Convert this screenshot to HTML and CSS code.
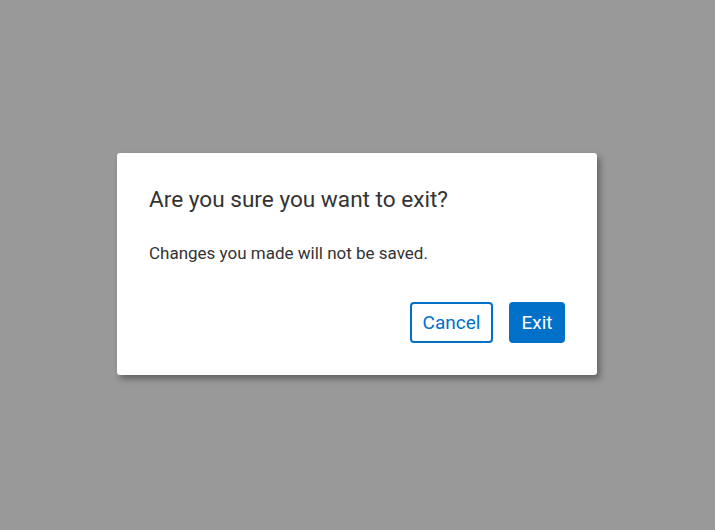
FILE: index.html
```html
<!DOCTYPE html>
<html>
<head>
<meta charset="utf-8">
<link rel="stylesheet" href="styles.css">
</head>
<body>
<div class="overlay">
  <div class="dialog" role="dialog">
    <h2 class="title">Are you sure you want to exit?</h2>
    <p class="message">Changes you made will not be saved.</p>
    <div class="actions">
      <button class="btn btn-secondary">Cancel</button>
      <button class="btn btn-primary">Exit</button>
    </div>
  </div>
</div>
</body>
</html>
```
FILE: styles.css
```css
html, body {
  margin: 0;
  padding: 0;
  height: 100%;
}
body {
  background: #999999;
  font-family: Roboto, "Liberation Sans", sans-serif;
  color: #333333;
}
.overlay {
  display: flex;
  align-items: flex-start;
  justify-content: flex-start;
  padding: 153px 0 0 117px;
  box-sizing: border-box;
  height: 100%;
}
.dialog {
  width: 480px;
  box-sizing: border-box;
  background: #ffffff;
  border-radius: 3px;
  box-shadow: 3px 4px 6px rgba(0, 0, 0, 0.35);
  padding: 32px 32px 32px 32px;
}
.title {
  margin: 0;
  font-size: 22.6px;
  line-height: 30px;
  font-weight: 400;
  color: #333333;
}
.message {
  margin: 27px 0 0 0;
  font-size: 17px;
  line-height: 22px;
  color: #333333;
}
.actions {
  display: flex;
  justify-content: flex-end;
  gap: 16px;
  margin-top: 38px;
}
.btn {
  font-family: inherit;
  font-size: 19px;
  height: 41px;
  padding: 0 10.5px;
  border-radius: 4px;
  cursor: pointer;
  box-sizing: border-box;
}
.btn-secondary {
  background: #ffffff;
  color: #0070c9;
  border: 2px solid #0070c9;
}
.btn-primary {
  background: #0070c9;
  color: #ffffff;
  border: 2px solid #0070c9;
}
```
